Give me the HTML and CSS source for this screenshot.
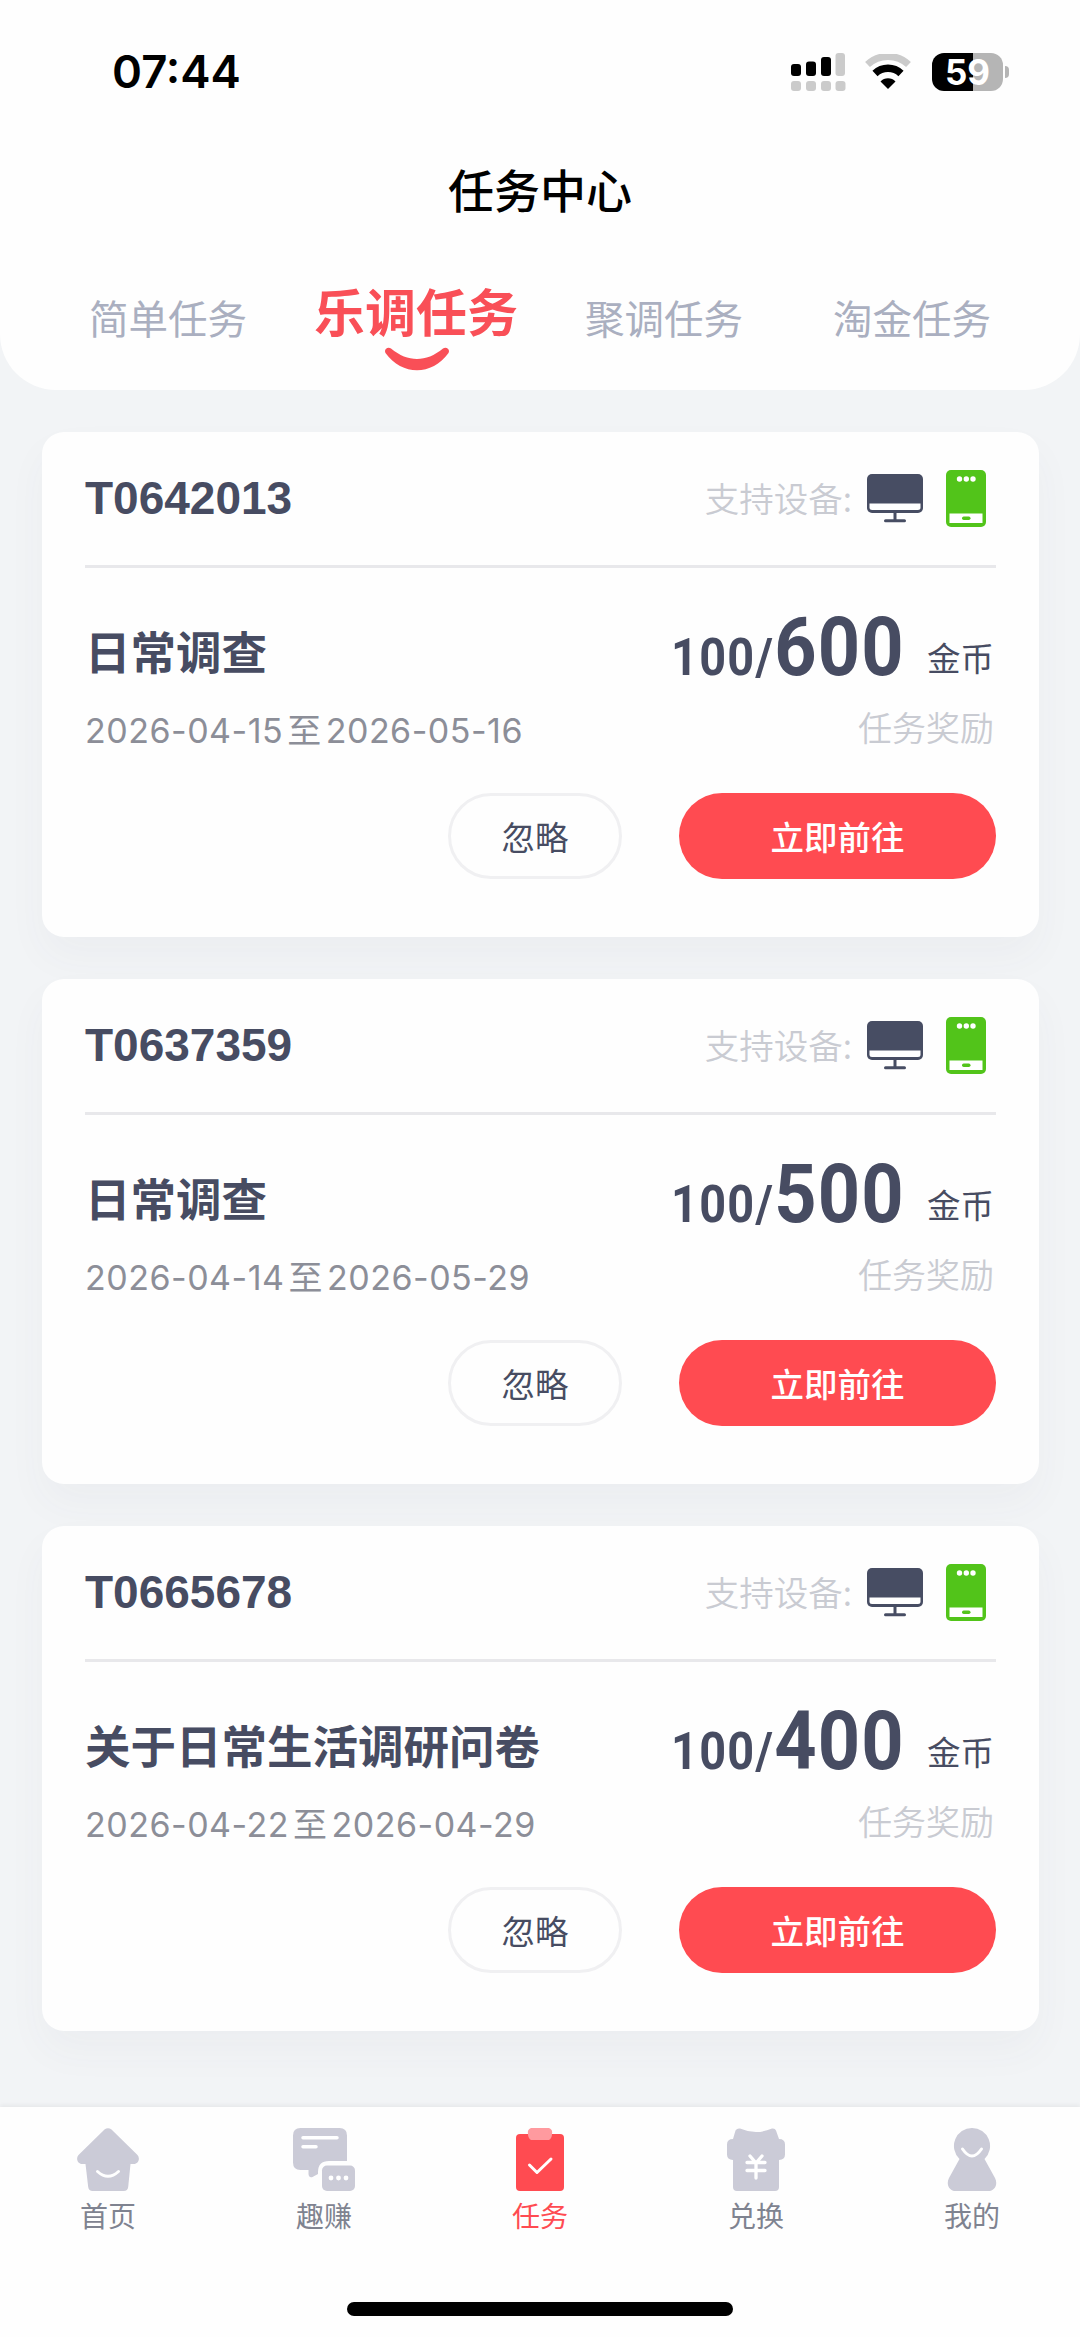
FILE: index.html
```html
<!DOCTYPE html>
<html lang="zh-CN">
<head>
<meta charset="utf-8">
<title>任务中心</title>
<link rel="stylesheet" href="styles.css">
</head>
<body>
<svg class="sprite" aria-hidden="true">
  <symbol id="monitor" viewBox="0 0 56 49">
    <rect width="56" height="39" rx="5" fill="#474d63"/>
    <path d="M2.500 29.500h51v4a2.500 2.500 0 0 1-2.500 2.500H5a2.500 2.500 0 0 1-2.500-2.500z" fill="#fff"/>
    <path d="M28 38v8M18.500 46.700h19" stroke="#474d63" stroke-width="3" stroke-linecap="round"/>
  </symbol>
  <symbol id="phone" viewBox="0 0 40 57">
    <rect width="40" height="57" rx="5" fill="#52c41a"/>
    <path d="M3.500 43.500h33V53h-33z" fill="#fff"/>
    <rect x="16" y="46.500" width="8.500" height="3.500" rx="1.700" fill="#52c41a"/>
    <circle cx="13.500" cy="9" r="2.700" fill="#fff"/><circle cx="20.300" cy="9" r="2.700" fill="#fff"/><circle cx="27" cy="9" r="2.700" fill="#fff"/>
  </symbol>
</svg>

<header class="header">
  <div class="status">
    <span class="time">07:44</span>
    <div class="indicators">
      <svg class="signal" width="55" height="38" viewBox="0 0 55 38">
        <g fill="#000"><rect y="11" width="10" height="12" rx="3"/><rect x="15" y="8.500" width="10" height="14.500" rx="3"/><rect x="30" y="4" width="10" height="19" rx="3"/></g>
        <g fill="#cbcbcb"><rect x="44.500" width="9.500" height="23" rx="3"/><rect y="28" width="10" height="10" rx="3"/><rect x="15" y="28" width="10" height="10" rx="3"/><rect x="30" y="28" width="10" height="10" rx="3"/><rect x="44.500" y="28" width="10" height="10" rx="3"/></g>
      </svg>
      <svg class="wifi" width="46" height="35" viewBox="0 0 46 35">
        <path d="M2.500 10.500a30 30 0 0 1 41 0" fill="none" stroke="#cbcbcb" stroke-width="7"/>
        <path d="M10 19.500a19 19 0 0 1 26 0" fill="none" stroke="#000" stroke-width="7.500"/>
        <path d="M15.500 27.500a10.500 10.500 0 0 1 15 0L23 35z"/>
      </svg>
      <div class="battery">59</div>
    </div>
  </div>
  <h1 class="title">任务中心</h1>
  <nav class="tabs">
    <span class="tab">简单任务</span>
    <span class="tab active">乐调任务
      <svg class="smile" width="66" height="24" viewBox="0 0 66 24"><path d="M1.500 6C-.5 2 4-.5 7 1.500 24 15.500 42 15.500 59 1.500 62 -.5 66.500 2 64.500 6 48 29 18 29 1.500 6z" fill="#f94f57"/></svg>
    </span>
    <span class="tab">聚调任务</span>
    <span class="tab">淘金任务</span>
  </nav>
</header>

<main class="list">
  <article class="card">
    <div class="card-head">
      <h2 class="code">T0642013</h2>
      <span class="support">支持设备:</span>
      <svg class="monitor"><use href="#monitor"/></svg>
      <svg class="phone"><use href="#phone"/></svg>
    </div>
    <div class="row main-row">
      <h3 class="name">日常调查</h3>
      <div class="reward"><span class="amount"><span class="low">100/</span><span class="high">600</span></span><span class="unit">金币</span></div>
    </div>
    <div class="row sub-row">
      <span class="date">2026-04-15<i>至</i>2026-05-16</span>
      <span class="reward-label">任务奖励</span>
    </div>
    <div class="actions"><button class="ignore">忽略</button><button class="go">立即前往</button></div>
  </article>

  <article class="card">
    <div class="card-head">
      <h2 class="code">T0637359</h2>
      <span class="support">支持设备:</span>
      <svg class="monitor"><use href="#monitor"/></svg>
      <svg class="phone"><use href="#phone"/></svg>
    </div>
    <div class="row main-row">
      <h3 class="name">日常调查</h3>
      <div class="reward"><span class="amount"><span class="low">100/</span><span class="high">500</span></span><span class="unit">金币</span></div>
    </div>
    <div class="row sub-row">
      <span class="date">2026-04-14<i>至</i>2026-05-29</span>
      <span class="reward-label">任务奖励</span>
    </div>
    <div class="actions"><button class="ignore">忽略</button><button class="go">立即前往</button></div>
  </article>

  <article class="card">
    <div class="card-head">
      <h2 class="code">T0665678</h2>
      <span class="support">支持设备:</span>
      <svg class="monitor"><use href="#monitor"/></svg>
      <svg class="phone"><use href="#phone"/></svg>
    </div>
    <div class="row main-row">
      <h3 class="name">关于日常生活调研问卷</h3>
      <div class="reward"><span class="amount"><span class="low">100/</span><span class="high">400</span></span><span class="unit">金币</span></div>
    </div>
    <div class="row sub-row">
      <span class="date">2026-04-22<i>至</i>2026-04-29</span>
      <span class="reward-label">任务奖励</span>
    </div>
    <div class="actions"><button class="ignore">忽略</button><button class="go">立即前往</button></div>
  </article>
</main>

<footer class="tabbar">
  <div class="items">
    <div class="item">
      <svg width="62" height="63" viewBox="0 0 62 63">
        <path d="M27.500 1.500q3.500-2.500 7 0L60 26.500c4 4 1 9.500-3 9.500h-3.500l-2.300 23q-.5 4-4.500 4h-31q-4 0-4.500-4L8.500 36H5C1 36-2 30.500 2 26.500z" fill="#cbcbd7"/>
        <path d="M20.500 43.500q10.500 9.500 21 0" fill="none" stroke="#fff" stroke-width="3" stroke-linecap="round"/>
      </svg>
      <span>首页</span>
    </div>
    <div class="item">
      <svg width="62" height="63" viewBox="0 0 62 63">
        <path d="M7.500 0h39Q54 0 54 7.500V33H36q-11 0-11 11v2l-5.500 3q-4 1-4-3.500V42h-8Q0 42 0 34.500v-27Q0 0 7.500 0z" fill="#cbcbd7"/>
        <rect x="29" y="37.500" width="33" height="25.500" rx="5" fill="#cbcbd7"/>
        <path d="M10 9.800h34M10 18.800h13" stroke="#fff" stroke-width="3.500" stroke-linecap="round"/>
        <g fill="#fff"><circle cx="38" cy="50" r="2.400"/><circle cx="45.500" cy="50" r="2.400"/><circle cx="53" cy="50" r="2.400"/></g>
      </svg>
      <span>趣赚</span>
    </div>
    <div class="item current">
      <svg width="62" height="63" viewBox="0 0 62 63">
        <rect x="7" y="6" width="48" height="57" rx="4" fill="#ff4b51"/>
        <path d="M22 0h18q4 1.500 3 6 0 4-3 6H22q-3-2-3-6-1-4.500 3-6z" fill="#ff9a9f"/>
        <path d="M20.500 37l7.500 7.500L42 31" fill="none" stroke="#fff" stroke-width="3" stroke-linecap="round" stroke-linejoin="round"/>
      </svg>
      <span>任务</span>
    </div>
    <div class="item">
      <svg width="62" height="63" viewBox="0 0 62 63">
        <path d="M10.500 2.500Q12 0 15 .5q16 7 32 0 3-.5 4 2l3 8.500q6 0 6 5.500v10q0 5-6 5.500v27q0 4-4 4H12q-4 0-4-4V32q-6-.5-6-5.500v-10Q2 11 8 11z" fill="#cbcbd7"/>
        <path d="M25 28l6 7 6-7M22 34.500h18M22 42.500h18M31 35v15" fill="none" stroke="#fff" stroke-width="3.300" stroke-linecap="round"/>
      </svg>
      <span>兑换</span>
    </div>
    <div class="item">
      <svg width="62" height="63" viewBox="0 0 62 63">
        <path d="M31 0a18 18 0 0 1 12.500 31L54 50c3.500 7-1 13-6.500 13h-33C9 63 4.500 57 8 50l10.500-19A18 18 0 0 1 31 0z" fill="#cbcbd7"/>
        <path d="M21.500 21q9.500 14 19 0" fill="none" stroke="#fff" stroke-width="3" stroke-linecap="round"/>
      </svg>
      <span>我的</span>
    </div>
  </div>
  <div class="home-bar"></div>
</footer>
</body>
</html>
```
FILE: styles.css
```css
* { box-sizing: border-box; margin: 0; padding: 0; }

body {
  width: 1080px;
  height: 2337px;
  overflow: hidden;
  display: flex;
  flex-direction: column;
  background: #f2f4f6;
  font-family: "Noto Sans CJK SC", sans-serif;
  color: #474c62;
}

svg { display: block; flex: none; }
.sprite { position: absolute; width: 0; height: 0; }

.header {
  height: 390px;
  flex: none;
  background: #fefefe;
  border-radius: 0 0 56px 56px;
  display: flex;
  flex-direction: column;
}

.status {
  height: 143px;
  padding: 0 72px 0 112px;
  display: flex;
  align-items: center;
  justify-content: space-between;
  color: #000;
  font-family: Inter, sans-serif;
}
.time { font-size: 45.500px; font-weight: 600; line-height: 56px; }
.indicators { display: flex; align-items: center; }
.wifi { margin-left: 19px; }
.battery {
  position: relative;
  margin-left: 21px;
  margin-right: 5px;
  width: 71px;
  height: 38px;
  border-radius: 12px;
  background: linear-gradient(90deg, #000 41px, #b5b5b5 41px);
  color: #fff;
  font-size: 35px;
  font-weight: 700;
  line-height: 38px;
  text-align: center;
}
.battery::after {
  content: "";
  position: absolute;
  left: 73px;
  top: 13px;
  width: 4px;
  height: 12px;
  border-radius: 0 4px 4px 0;
  background: #b5b5b5;
}

.title {
  height: 91px;
  line-height: 91px;
  text-align: center;
  font-size: 46px;
  font-weight: 500;
  color: #000;
}

.tabs {
  flex: 1;
  padding: 0 44px;
  display: grid;
  grid-template-columns: repeat(4, 1fr);
}
.tab {
  padding-top: 43px;
  text-align: center;
  font-size: 39.500px;
  line-height: 80px;
  color: #aaafc0;
  white-space: nowrap;
}
.tab.active {
  position: relative;
  padding-top: 36px;
  font-size: 51px;
  font-weight: 600;
  color: #f94f57;
}
.smile { position: absolute; left: 92px; top: 113px; }

.list {
  flex: 1;
  padding: 42px 41px 0 42px;
  display: flex;
  flex-direction: column;
  gap: 42px;
}
.card {
  height: 505px;
  flex: none;
  padding: 0 43px;
  border-radius: 22px;
  background: #fefefe;
  box-shadow: 0 20px 40px rgba(70, 76, 110, 0.04);
}
.card-head {
  height: 136px;
  display: flex;
  align-items: center;
  border-bottom: 3px solid #e8e8eb;
}
.code {
  flex: 1;
  padding-bottom: 2px;
  font-family: "Liberation Sans", sans-serif;
  font-size: 46px;
  font-weight: 700;
  line-height: 52px;
}
.support {
  padding-bottom: 4px;
  font-size: 34.500px;
  font-weight: 350;
  line-height: 52px;
  color: #c9cbd2;
}
.monitor { width: 56px; height: 49px; margin-left: 15px; }
.phone { width: 40px; height: 57px; margin-left: 23px; margin-right: 10px; }

.row { display: flex; justify-content: space-between; }
.main-row { height: 126px; padding-top: 30px; }
.name { font-size: 45.500px; font-weight: 700; line-height: 105px; }
.reward { display: flex; align-items: baseline; line-height: 90px; }
.amount {
  margin-left: -42px;
  font-family: Roboto, sans-serif;
  font-weight: 700;
  white-space: nowrap;
  transform: translateY(4px) scaleX(0.9);
  transform-origin: right;
}
.low { font-size: 52px; letter-spacing: 1.500px; }
.high { font-size: 82px; letter-spacing: 1.200px; }
.unit { margin: 0 2px 0 22px; font-size: 33.500px; }
.sub-row { height: 74px; align-items: center; }
.date {
  font-family: Inter, "Noto Sans CJK SC", sans-serif;
  font-size: 34px;
  line-height: 48px;
  letter-spacing: 0.500px;
  color: #8c8e98;
}
.date i { font-style: normal; margin: 0 4px; }
.reward-label {
  margin-right: 2px;
  padding-bottom: 9px;
  font-size: 34px;
  font-weight: 350;
  line-height: 50px;
  color: #c9cbd2;
}

.actions { display: flex; justify-content: flex-end; gap: 57px; margin-top: 25px; }
.actions button {
  height: 86px;
  border-radius: 43px;
  font-family: inherit;
  font-size: 33.500px;
  line-height: 80px;
}
.ignore { width: 174px; border: 3px solid #f0f0f2; background: #fefefe; color: #474c62; }
.go { width: 317px; border: 0; background: #ff4b51; color: #fff; font-weight: 500; }

.tabbar {
  height: 230px;
  flex: none;
  display: flex;
  flex-direction: column;
  align-items: center;
  justify-content: space-between;
  padding: 21px 0 21px;
  background: #fefefe;
  box-shadow: 0 -2px 4px rgba(0, 0, 0, 0.05);
}
.items { width: 1080px; display: grid; grid-template-columns: repeat(5, 1fr); }
.item {
  display: flex;
  flex-direction: column;
  align-items: center;
  gap: 3px;
  font-size: 28px;
  line-height: 42px;
  color: #7f8390;
}
.current { color: #ff4b51; }
.home-bar { width: 386px; height: 14px; border-radius: 7px; background: #000; }
```
